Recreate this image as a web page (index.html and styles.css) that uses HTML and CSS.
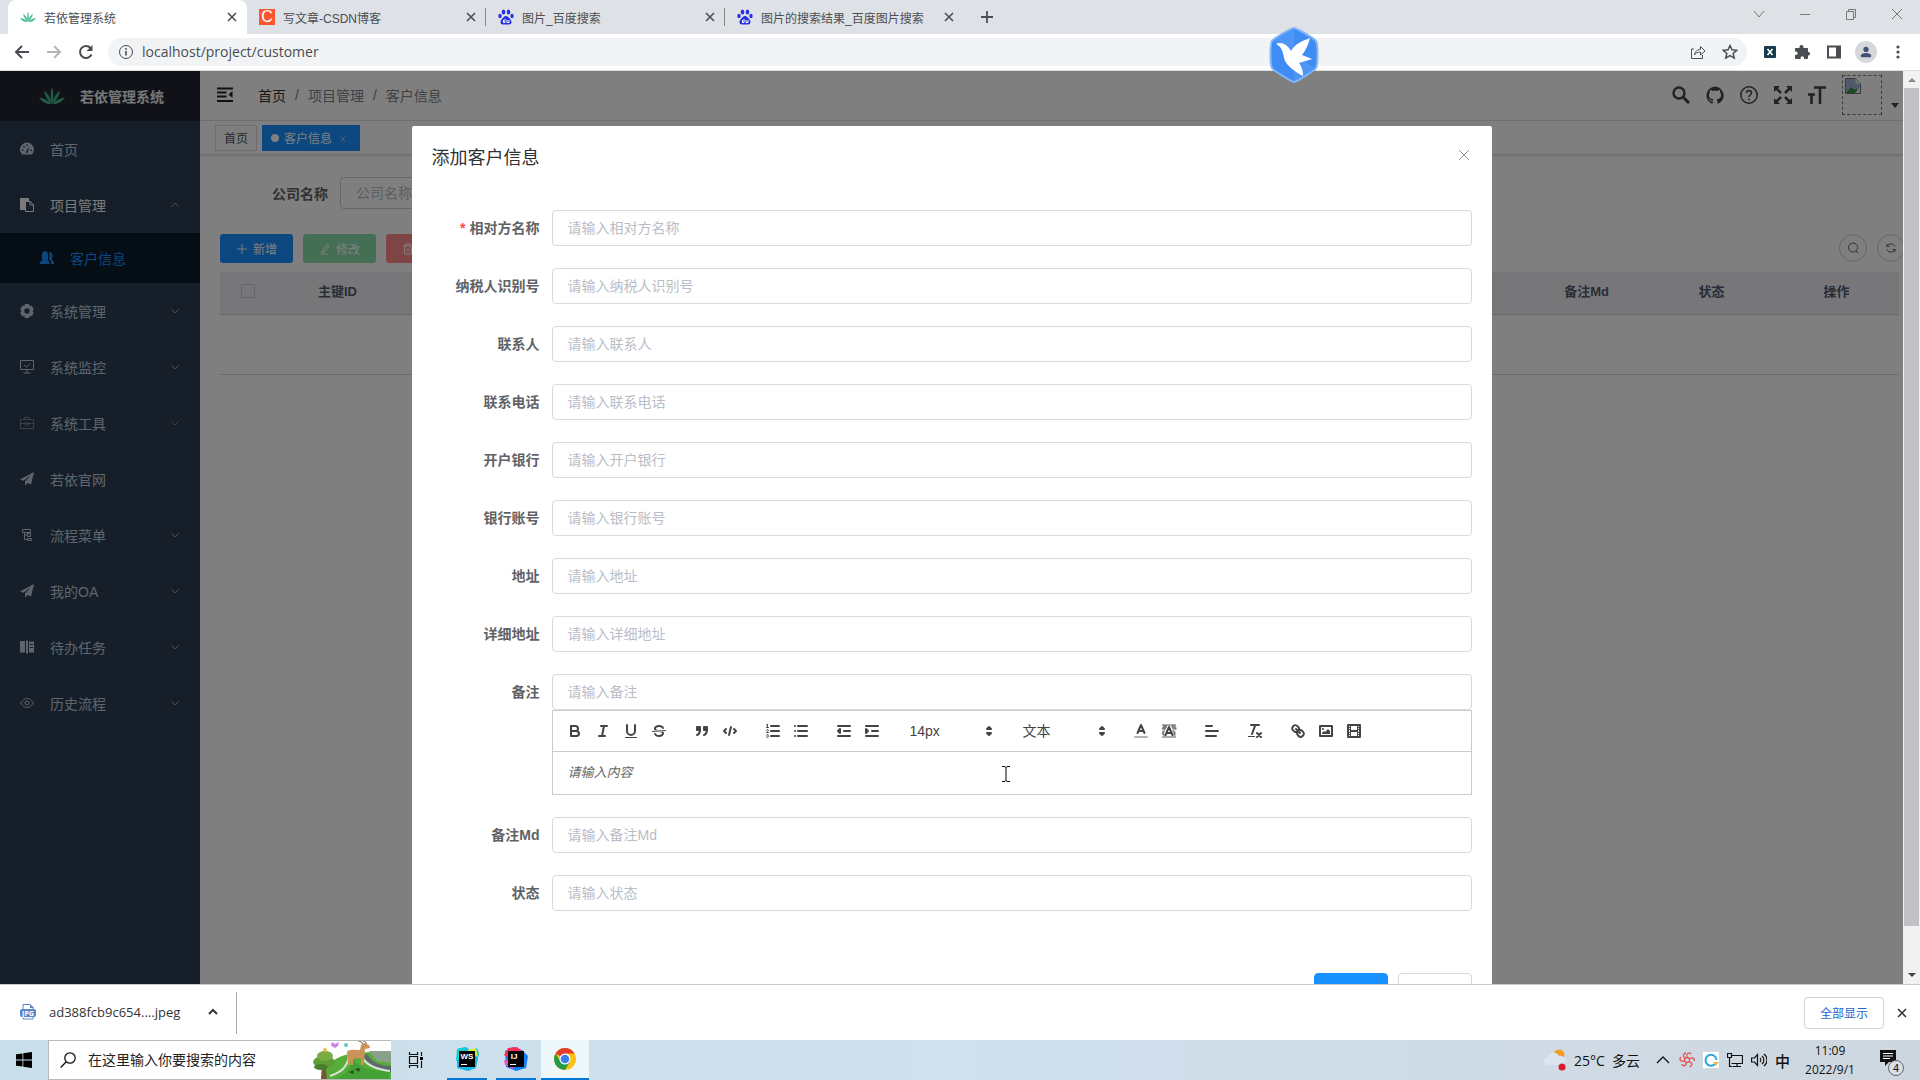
FILE: index.html
```html
<!DOCTYPE html>
<html lang="zh-CN">
<head>
    <meta charset="UTF-8">
    <meta name="viewport" content="width=device-width, initial-scale=1.0">
    <title>若依管理系统</title>
    <link rel="stylesheet" href="styles.css">
</head>
<body>
<!-- 公用图标 -->
<svg class="symbols" aria-hidden="true">
    <symbol id="leaf" viewBox="0 0 26 18">
        <path fill="#3fb98c" d="M13 17C11 12 11.500 5 13 0c1.500 5 2 12 0 17zM12.500 17C9 14 6 9 5 3.500 9 7 12 11 12.500 17zM13.500 17C17 14 20 9 21 3.500 17 7 14 11 13.500 17zM12 17C8 17.500 3 15 0 10.500c5 .5 9.500 3 12 6.500zM14 17c4 .5 9-2 12-6.500-5 .5-9.500 3-12 6.500z"/>
    </symbol>
    <symbol id="paw" viewBox="0 0 16 16">
        <g fill="#2932e1"><ellipse cx="5.500" cy="3" rx="1.800" ry="2.500"/><ellipse cx="10.500" cy="3" rx="1.800" ry="2.500"/><ellipse cx="2" cy="7" rx="1.700" ry="2.300"/><ellipse cx="14" cy="7" rx="1.700" ry="2.300"/><path d="M8 7c2 0 3 2 4.500 3.500C14 12 14 15.500 11 15.500H5c-3 0-3-3.500-1.500-5C5 9 6 7 8 7z"/></g>
        <path d="M5.500 11v2.500h1.500V10M9 11v2.500h2V11" fill="none" stroke="#fff"/>
    </symbol>
    <symbol id="close" viewBox="0 0 10 10"><path d="M1 1l8 8M9 1L1 9" fill="none" stroke="currentColor" stroke-width="1.600"/></symbol>
    <symbol id="thin-close" viewBox="0 0 12 12"><path d="M1 1l10 10M11 1L1 11" fill="none" stroke="currentColor"/></symbol>
    <symbol id="down" viewBox="0 0 10 10"><path d="M1 3l4 4 4-4" fill="none" stroke="currentColor"/></symbol>
    <symbol id="up" viewBox="0 0 10 10"><path d="M1 7l4-4 4 4" fill="none" stroke="currentColor"/></symbol>
    <symbol id="plane" viewBox="0 0 14 14"><path fill="currentColor" d="M14 0L0 7.500l3.500 1.300L11 3 5 9.500V14l2.300-3 3.700 1.500z"/></symbol>
    <symbol id="picker" viewBox="0 0 18 18"><path fill="#444" stroke="#444" stroke-linejoin="round" stroke-width="2" d="M7 11l2 2 2-2zM7 7l2-2 2 2z"/></symbol>
</svg>

<header class="tab-strip">
    <div class="tab active">
        <svg class="icon16"><use href="#leaf"/></svg>
        <span>若依管理系统</span>
        <button class="tab-close" aria-label="关闭"><svg><use href="#close"/></svg></button>
    </div>
    <div class="tab">
        <span class="csdn">C</span>
        <span>写文章-CSDN博客</span>
        <button class="tab-close" aria-label="关闭"><svg><use href="#close"/></svg></button>
    </div>
    <div class="tab">
        <svg class="icon16"><use href="#paw"/></svg>
        <span>图片_百度搜索</span>
        <button class="tab-close" aria-label="关闭"><svg><use href="#close"/></svg></button>
    </div>
    <div class="tab">
        <svg class="icon16"><use href="#paw"/></svg>
        <span>图片的搜索结果_百度图片搜索</span>
        <button class="tab-close" aria-label="关闭"><svg><use href="#close"/></svg></button>
    </div>
    <button class="new-tab" aria-label="新标签页"><svg viewBox="0 0 12 12"><path d="M6 0v12M0 6h12" stroke="currentColor" stroke-width="1.800"/></svg></button>
    <div class="window-buttons">
        <button aria-label="搜索标签页"><svg viewBox="0 0 12 12"><path d="M1 3l5 6 5-6"/></svg></button>
        <button aria-label="最小化"><svg viewBox="0 0 12 12"><path d="M1 6.500h10"/></svg></button>
        <button aria-label="还原"><svg viewBox="0 0 12 12"><path d="M1.500 3.500h7v8h-7zM3.500 3.500v-2h7v8h-2"/></svg></button>
        <button aria-label="关闭窗口"><svg viewBox="0 0 12 12"><path d="M1 1l10 10M11 1L1 11"/></svg></button>
    </div>
</header>

<div class="toolbar">
    <button aria-label="后退"><svg viewBox="0 0 16 16"><path d="M15 8H2M8 2L2 8l6 6" stroke-width="2"/></svg></button>
    <button class="disabled" aria-label="前进"><svg viewBox="0 0 16 16"><path d="M1 8h13M8 2l6 6-6 6" stroke-width="2"/></svg></button>
    <button aria-label="重新加载"><svg viewBox="0 0 16 16"><path d="M13.500 10.500A6 6 0 1 1 12.500 4" stroke-width="2"/><path d="M14.500 1v6h-6z" fill="currentColor" stroke="none"/></svg></button>
    <div class="omnibox">
        <svg viewBox="0 0 16 16"><circle cx="8" cy="8" r="6.500"/><path d="M8 7v4.500M8 4v1.700" stroke-width="1.600"/></svg>
        <input aria-label="地址" value="localhost/project/customer">
        <svg viewBox="0 0 16 16"><path d="M4 5H1.500v9.500h11V11M4.500 11c.5-4 3-5.500 6-5.500V2.500L15 7l-4.500 4V8c-3 0-5 1-6 3z"/></svg>
        <svg viewBox="0 0 16 16"><path d="M8 1.500l2 4.300 4.700.5-3.500 3.100 1 4.700L8 11.700l-4.200 2.400 1-4.700L1.300 6.300 6 5.800z" stroke-width="1.500"/></svg>
    </div>
    <div class="extensions">
        <button aria-label="扩展 X"><svg viewBox="0 0 16 16"><rect x="2" y="2" width="12" height="12" rx="1" fill="#173b4b" stroke="none"/><path d="M5.500 5l5 6M10.500 5l-5 6" stroke="#fff" stroke-width="1.600"/></svg></button>
        <button aria-label="扩展程序"><svg viewBox="0 0 16 16"><path fill="currentColor" stroke="none" d="M1 5c0-.6.400-1 1-1h3.500V3a2 2 0 0 1 4 0v1H13c.6 0 1 .4 1 1v3h.3a1.700 1.700 0 0 1 0 3.500H14V14c0 .6-.4 1-1 1h-3v-1a1.700 1.700 0 0 0-3.400 0v1H2c-.6 0-1-.4-1-1v-3h1a1.700 1.700 0 0 0 0-3.400H1z"/></svg></button>
        <button aria-label="侧边栏"><svg viewBox="0 0 16 16"><path d="M2 2.500h12v11H2z" stroke-width="2"/><path d="M10 2h4v12h-4z" fill="currentColor" stroke="none"/></svg></button>
        <button class="avatar" aria-label="用户"><svg viewBox="0 0 16 16"><g fill="#3f5270" stroke="none"><circle cx="8" cy="5" r="3"/><path d="M2 14v-2c0-2 3-3 6-3s6 1 6 3v2z"/></g></svg></button>
        <button aria-label="菜单"><svg viewBox="0 0 16 16"><g fill="currentColor" stroke="none"><circle cx="8" cy="3" r="1.600"/><circle cx="8" cy="8" r="1.600"/><circle cx="8" cy="13" r="1.600"/></g></svg></button>
    </div>
</div>

<!-- 悬浮的小鸟 -->
<svg class="bird" viewBox="0 0 50 56">
    <path d="M25 1c2 0 20 10 22 13s2 24 0 27-20 14-22 14S5 44 3 41s-2-24 0-27S23 1 25 1z" fill="#3f8cf5" stroke="#83b6fa" stroke-width="2"/>
    <path d="M25 2v26L4 14C8 10 22 2 25 2zM25 28l21 13c-3 4-18 13-21 13z" fill="#5b9ff8" opacity=".5"/>
    <path d="M7 17c4-2 9-1 13 4l2 3c4-7 11-10 19-13-2 7-4 12-8 17l10 4c-4 1-9 3-13 4 3 4 4 8 4 13-7-4-17-10-19-18-1-6-2-11-8-14z" fill="#fff"/>
</svg>

<div class="viewport">
    <div class="page">
        <aside class="sidebar">
            <a class="logo" href="#"><svg><use href="#leaf"/></svg>若依管理系统</a>
            <nav class="menu">
                <a href="#"><svg viewBox="0 0 14 14"><path fill="currentColor" fill-rule="evenodd" d="M2 12.500a7 7 0 1 1 10 0zM6.300 11h1.400L9.500 4.500 6.300 9zM2 7.500h1.500v1.500H2zM3.300 4h1.500v1.500H3.300zM6.300 2.500h1.400V4H6.300zM10.500 7.500H12V9h-1.500z"/></svg>首页</a>
                <a class="opened" href="#"><svg viewBox="0 0 14 14"><path fill="currentColor" d="M0 0h9v3H5v9H0z"/><path d="M5.500 3.500h5l3 3.500v6.500h-8zM10 3.500V7h3.500" fill="none" stroke="currentColor"/></svg>项目管理<svg class="arrow"><use href="#up"/></svg></a>
                <a class="child" href="#"><svg viewBox="0 0 14 14"><path fill="currentColor" d="M0 13v-2l2.500-2C1 6 1.500 0 5 0s4 6 2.500 9l2 2v2zM9 1c4 0 4 5 2.500 7.500L14 11v2h-3v-3L9 8.500C10 6 10 3 9 1z"/></svg>客户信息</a>
                <a href="#"><svg viewBox="0 0 14 14"><path fill="currentColor" fill-rule="evenodd" d="M5 0h4l.7 2 2.100-.2 2 3.400L12.500 7l1.300 1.800-2 3.400-2.100-.2L9 14H5l-.7-2-2.100.2-2-3.400L1.500 7 .2 5.200l2-3.400 2.100.2zM7 4.300a2.700 2.700 0 1 0 0 5.400 2.700 2.700 0 0 0 0-5.400z"/></svg>系统管理<svg class="arrow"><use href="#down"/></svg></a>
                <a href="#"><svg viewBox="0 0 14 14"><path d="M.5.500h13v9H.5zM7 9.500v3M3.500 13h7M4 5l2.500 2L10 3.500" fill="none" stroke="currentColor"/></svg>系统监控<svg class="arrow"><use href="#down"/></svg></a>
                <a class="dim-icon" href="#"><svg viewBox="0 0 14 14"><path d="M.5 3.500h13v9H.5zM4.500 3.500v-2h5v2M.5 7.500h13M5.500 6v3h3V6" fill="none" stroke="currentColor"/></svg>系统工具<svg class="arrow"><use href="#down"/></svg></a>
                <a href="#"><svg><use href="#plane"/></svg>若依官网</a>
                <a href="#"><svg viewBox="0 0 14 14"><path d="M2.500 1.500h8v3h-8zM4.500 4.500v7h3M4.500 7h3M7.500 5.500h3v3h-3zM7.500 10.500h4v2h-4z" fill="none" stroke="currentColor"/></svg>流程菜单<svg class="arrow"><use href="#down"/></svg></a>
                <a href="#"><svg><use href="#plane"/></svg>我的OA<svg class="arrow"><use href="#down"/></svg></a>
                <a href="#"><svg viewBox="0 0 14 14"><path fill="currentColor" fill-rule="evenodd" d="M0 1h5v11.500H0zM6 0l2 1v13l-2-1zM9 1.500h5v11H9zM10 4v1h3V4zM10 7v1h3V7z"/></svg>待办任务<svg class="arrow"><use href="#down"/></svg></a>
                <a href="#"><svg viewBox="0 0 14 14"><path d="M.7 7C3 3.500 5 2.500 7 2.500S11 3.500 13.300 7C11 10.500 9 11.500 7 11.500S3 10.500.7 7z" fill="none" stroke="currentColor"/><circle cx="7" cy="7" r="2" fill="none" stroke="currentColor"/></svg>历史流程<svg class="arrow"><use href="#down"/></svg></a>
            </nav>
        </aside>

        <main class="main">
            <div class="navbar">
                <svg class="hamburger" viewBox="0 0 16 16"><path d="M0 1.500h16M0 5.500h9.500M0 9.500h9.500M0 14h16" fill="none" stroke="#222" stroke-width="1.800"/><path d="M15.500 4v7L11.500 7.500z" fill="#222"/></svg>
                <div class="breadcrumb"><a href="#">首页</a><i>/</i><span>项目管理</span><i>/</i><span>客户信息</span></div>
                <div class="nav-icons">
                    <svg viewBox="0 0 18 18"><circle cx="7" cy="7" r="5.500" stroke-width="2.400"/><path d="M11 11l6 6" stroke-width="3"/></svg>
                    <svg viewBox="0 0 18 18"><path fill="currentColor" stroke="none" d="M9 .5a9 9 0 0 0-3 17.300c.5.100.7-.2.700-.5v-2c-2.500.5-3-1.100-3-1.100-.8-1.600-1.600-1.600-.8-1.600 1 .1 1.400 1.500 1.400 1.500.8 1 2 .8 2.500.5 0-.6.300-1 .6-1.300C5 13 3 12.300 3 8.800c0-1 .4-1.800 1-2.400-.2-.6-.3-1.500.1-2.500 0 0 .9-.2 2.600 1a8 8 0 0 1 4.600 0c1.700-1.200 2.600-1 2.600-1 .4 1 .3 1.900.1 2.500.6.600 1 1.400 1 2.400 0 3.500-2 4.200-4.300 4.500.4.400.7 1 .7 2v2c0 .3.200.6.700.5A9 9 0 0 0 9 .5z"/></svg>
                    <svg viewBox="0 0 18 18"><circle cx="9" cy="9" r="8.200" stroke-width="1.500"/><path d="M6.500 7C6.500 3.500 11.500 3.500 11.500 7c0 2-2.500 2-2.500 4M9 12.500v1.700" stroke-width="1.500"/></svg>
                    <svg viewBox="0 0 18 18"><path d="M2 2l5 5M16 2l-5 5M2 16l5-5M16 16l-5-5" stroke-width="2.500"/><path d="M0 0h6L0 6zM18 0h-6l6 6zM0 18h6l-6-6zM18 18h-6l6-6z" fill="currentColor" stroke="none"/></svg>
                    <svg viewBox="0 0 18 18"><path d="M6 1.500h12M12 1v17M0 8.500h7M3.500 8v10" stroke-width="2.600"/></svg>
                    <div class="broken"><svg viewBox="0 0 16 16"><path d="M.5.500h10l5 5v10H.5z" fill="#9eb6d8" stroke="#777"/><path d="M1 15l5-6 4 3 2-2v5z" fill="#3c9440" stroke="none"/><path d="M10.500.5v5h5zM15 9l-5 6h5z" fill="#eee" stroke="none"/></svg></div>
                    <svg class="caret" viewBox="0 0 10 6"><path d="M1 0h8L5 5z" fill="currentColor" stroke="none"/></svg>
                </div>
            </div>
            <div class="tags">
                <a class="tag" href="#">首页</a>
                <a class="tag active" href="#">客户信息<svg><use href="#thin-close"/></svg></a>
            </div>
            <div class="content">
                <div class="query">
                    <label for="company">公司名称</label>
                    <input id="company" placeholder="公司名称">
                </div>
                <div class="actions">
                    <button class="btn primary"><svg viewBox="0 0 12 12"><path d="M6 1v10M1 6h10"/></svg>新增</button>
                    <button class="btn success" disabled><svg viewBox="0 0 12 12"><path d="M2 11h7M3 8.500l5-7 2 1.500-5 6-2.500.5z"/></svg>修改</button>
                    <button class="btn danger" disabled><svg viewBox="0 0 12 12"><path d="M1 3h10M4 3V1h4v2M2.500 3v8h7V3M5 5.500v3M7 5.500v3"/></svg>删除</button>
                    <div class="tools">
                        <button aria-label="隐藏搜索"><svg viewBox="0 0 12 12"><circle cx="6" cy="5.500" r="4.500"/><path d="M9 9l2 2"/></svg></button>
                        <button aria-label="刷新"><svg viewBox="0 0 12 12"><path d="M2 4.500a4.300 4.300 0 0 1 8 0M10 7.500a4.300 4.300 0 0 1-8 0M2 2v2.500h2.500M10 10V7.500H7.500"/></svg></button>
                    </div>
                </div>
                <table>
                    <thead>
                        <tr><th class="check"><input type="checkbox" aria-label="全选"></th><th>主键ID</th><th colspan="9"></th><th>备注Md</th><th>状态</th><th>操作</th></tr>
                    </thead>
                    <tbody>
                        <tr><td colspan="14"></td></tr>
                    </tbody>
                </table>
            </div>
        </main>

        <div class="mask">
            <section class="dialog" role="dialog" aria-labelledby="dialog-title">
                <header>
                    <h2 id="dialog-title">添加客户信息</h2>
                    <button aria-label="关闭"><svg><use href="#thin-close"/></svg></button>
                </header>
                <form>
                    <div class="row required"><label for="f1">相对方名称</label><input id="f1" placeholder="请输入相对方名称"></div>
                    <div class="row"><label for="f2">纳税人识别号</label><input id="f2" placeholder="请输入纳税人识别号"></div>
                    <div class="row"><label for="f3">联系人</label><input id="f3" placeholder="请输入联系人"></div>
                    <div class="row"><label for="f4">联系电话</label><input id="f4" placeholder="请输入联系电话"></div>
                    <div class="row"><label for="f5">开户银行</label><input id="f5" placeholder="请输入开户银行"></div>
                    <div class="row"><label for="f6">银行账号</label><input id="f6" placeholder="请输入银行账号"></div>
                    <div class="row"><label for="f7">地址</label><input id="f7" placeholder="请输入地址"></div>
                    <div class="row"><label for="f8">详细地址</label><input id="f8" placeholder="请输入详细地址"></div>
                    <div class="row">
                        <label for="f9">备注</label>
                        <div class="field">
                            <input id="f9" placeholder="请输入备注">
                            <div class="editor">
                                <div class="ql-toolbar">
                                    <div class="formats">
                                        <button type="button" aria-label="加粗"><svg viewBox="0 0 18 18"><path d="M5 4h4.500a2.500 2.500 0 0 1 0 5H5zM5 9h5.500a2.500 2.500 0 0 1 0 5H5z"/></svg></button>
                                        <button type="button" aria-label="斜体"><svg viewBox="0 0 18 18"><path d="M7 4h6M5 14h6M8 14l2-10"/></svg></button>
                                        <button type="button" aria-label="下划线"><svg viewBox="0 0 18 18"><path d="M5 3v6a4 4 0 0 0 8 0V3"/><rect class="fill" x="3" y="15" width="12" height="1"/></svg></button>
                                        <button type="button" aria-label="删除线"><svg viewBox="0 0 18 18"><path class="thin" d="M15.500 8.500l-13 1"/><path class="fill" d="M9.007,8C6.542,7.791,6,7.519,6,6.500,6,5.792,7.283,5,9,5c1.571,0,2.765.679,2.969,1.309a1,1,0,0,0,1.900-.617C13.356,4.106,11.354,3,9,3,6.200,3,4,4.538,4,6.500a3.200,3.200,0,0,0,.5,1.843ZM8.984,10C11.457,10.208,12,10.479,12,11.500c0,.708-1.283,1.500-3,1.500-1.571,0-2.765-.679-2.969-1.309a1,1,0,1,0-1.900.617C4.644,13.894,6.646,15,9,15c2.800,0,5-1.538,5-3.500a3.200,3.200,0,0,0-.5-1.843Z"/></svg></button>
                                    </div>
                                    <div class="formats">
                                        <button type="button" aria-label="引用"><svg viewBox="0 0 18 18"><path class="both" d="M4 5h3v3H4zM11 5h3v3h-3zM7 8c0 4.031-3 5-3 5M14 8c0 4.031-3 5-3 5"/></svg></button>
                                        <button type="button" aria-label="代码块"><svg viewBox="0 0 18 18"><path d="M5 7L3 9l2 2M13 7l2 2-2 2M10 5L8 13"/></svg></button>
                                    </div>
                                    <div class="formats">
                                        <button type="button" aria-label="有序列表"><svg viewBox="0 0 18 18"><path d="M7 4h8M7 9h8M7 14h8"/><path class="thin" d="M2.500 2.800l1-.5v3.200M2.500 5.500h2M4.500 10.500h-2c0-.234 1.850-1.076 1.850-2.234a.959.959 0 0 0-1.850-.11M2.500 14.846a.959.959 0 0 0 1.850-.109A.7.7 0 0 0 3.750 14a.688.688 0 0 0 .6-.736.959.959 0 0 0-1.850-.109"/></svg></button>
                                        <button type="button" aria-label="无序列表"><svg viewBox="0 0 18 18"><path d="M6 4h9M6 9h9M6 14h9M3 4h0M3 9h0M3 14h0"/></svg></button>
                                    </div>
                                    <div class="formats">
                                        <button type="button" aria-label="减少缩进"><svg viewBox="0 0 18 18"><path d="M3 14h12M3 4h12M9 9h6"/><path class="both" d="M5 7v4L3 9z"/></svg></button>
                                        <button type="button" aria-label="增加缩进"><svg viewBox="0 0 18 18"><path d="M3 14h12M3 4h12M9 9h6"/><path class="both" d="M3 7v4l2-2z"/></svg></button>
                                    </div>
                                    <div class="picker"><select aria-label="字号"><option>14px</option></select><svg><use href="#picker"/></svg></div>
                                    <div class="picker"><select aria-label="标题"><option>文本</option></select><svg><use href="#picker"/></svg></div>
                                    <div class="formats">
                                        <button type="button" aria-label="字体颜色"><svg viewBox="0 0 18 18"><path d="M5.500 11L9 3l3.500 8M11.630 9H6.380"/><path d="M3 15h12" opacity=".4"/></svg></button>
                                        <button type="button" aria-label="背景颜色"><svg viewBox="0 0 18 18"><path class="thin" stroke-dasharray="1 1" d="M2.500 3h13M3.500 5h3M12 5h4M2.500 7h3M13 7h3M3.500 9h2M13 9h2M2.500 11h2M14 11h2M3.500 13h2M14 13h1M2.500 15h13M3.500 4h3M12 4h3M2.500 6h3M13 6h3M2.500 10h2M14 10h2M2.500 12h2M14 12h2"/><path d="M5.500 13L9 5l3.500 8M11.630 11H6.380"/></svg></button>
                                    </div>
                                    <div class="formats">
                                        <button type="button" aria-label="对齐"><svg viewBox="0 0 18 18"><path d="M3 9h12M3 14h10M3 4h6"/></svg></button>
                                    </div>
                                    <div class="formats">
                                        <button type="button" aria-label="清除格式"><svg viewBox="0 0 18 18"><path d="M5 3h8M6 12l3.350-9M11 11l4 4M15 11l-4 4"/><rect class="fill" x="2" y="14" width="7" height="1"/></svg></button>
                                    </div>
                                    <div class="formats">
                                        <button type="button" aria-label="链接"><svg viewBox="0 0 18 18"><path d="M7 7l4 4M8.900 4.577a3.476 3.476 0 0 1 .36 4.679A3.476 3.476 0 0 1 4.577 8.900C3.185 7.500 2.035 6.400 4.217 4.217S7.500 3.185 8.900 4.577ZM13.423 9.100a3.476 3.476 0 0 0-4.679-.36 3.476 3.476 0 0 0 .36 4.679c1.392 1.392 2.500 2.542 4.679.36S14.815 10.500 13.423 9.100Z"/></svg></button>
                                        <button type="button" aria-label="图片"><svg viewBox="0 0 18 18"><path d="M3 4h12v10H3z"/><path class="fill" d="M5 12v-1l2-2 1 1 3-3 2 2v3z"/><circle class="fill" cx="6" cy="7" r="1"/></svg></button>
                                        <button type="button" aria-label="视频"><svg viewBox="0 0 18 18"><path d="M3 3h12v12H3z"/><path class="fill" d="M5 3h1v12H5zM12 3h1v12h-1zM5 8h8v2H5zM3 5h3v1H3zM3 7h3v1H3zM3 10h3v1H3zM3 12h3v1H3zM12 5h3v1h-3zM12 7h3v1h-3zM12 10h3v1h-3zM12 12h3v1h-3z"/></svg></button>
                                    </div>
                                </div>
                                <textarea rows="1" aria-label="备注内容" placeholder="请输入内容"></textarea>
                                <svg class="cursor" viewBox="0 0 8 16"><path d="M0 .500h3l1 1 1-1h3M0 15.500h3l1-1 1 1h3M4 1v14" fill="none" stroke="#000"/></svg>
                            </div>
                        </div>
                    </div>
                    <div class="row"><label for="f10">备注Md</label><input id="f10" placeholder="请输入备注Md"></div>
                    <div class="row"><label for="f11">状态</label><input id="f11" placeholder="请输入状态"></div>
                </form>
                <footer>
                    <button class="confirm" aria-label="确定"></button>
                    <button aria-label="取消"></button>
                </footer>
            </section>
        </div>
    </div>
    <div class="scrollbar">
        <svg viewBox="0 0 10 6"><path d="M1 5h8L5 1z" fill="#8a8a8a"/></svg>
        <div class="thumb"></div>
        <svg viewBox="0 0 10 6"><path d="M1 1h8L5 5z" fill="#444"/></svg>
    </div>
</div>

<div class="downloads">
    <div class="download-item">
        <svg viewBox="0 0 16 16"><path d="M3 .500h7l3 3V15H3z" fill="#fff" stroke="#5b87c9"/><path d="M10 0v4h4z" fill="#5b87c9"/><rect y="5" width="16" height="8" rx="2" fill="#5b87c9"/><text x="8" y="12" text-anchor="middle">JPG</text></svg>
        <span>ad388fcb9c654....jpeg</span>
        <button aria-label="更多"><svg><use href="#up"/></svg></button>
    </div>
    <button class="show-all">全部显示</button>
    <button class="close-bar" aria-label="关闭"><svg><use href="#close"/></svg></button>
</div>

<footer class="taskbar">
    <button class="start" aria-label="开始"><svg viewBox="0 0 16 16"><path d="M0 2.300L6.500 1.400v6.200H0zM7.300 1.300L16 0v7.600H7.300zM0 8.400h6.500v6.200L0 13.700zM7.300 8.400H16V16l-8.700-1.300z"/></svg></button>
    <label class="search">
        <svg viewBox="0 0 16 16"><circle cx="10" cy="6" r="5.200" fill="none" stroke="#111" stroke-width="1.300"/><path d="M6 10L.7 15.500" stroke="#111" stroke-width="1.300"/></svg>
        <input placeholder="在这里输入你要搜索的内容">
        <svg class="scene" viewBox="0 0 78 38">
            <path d="M8 38c4-16 18-25 36-26 14-2 24 0 34-2v28z" fill="#58ad3a"/>
            <path d="M56 10h22v12l-14-2z" fill="#8aa08b"/><path d="M54 13c6 9 14 12 24 12v6c-12-1-22-7-28-16z" fill="#5f6a6b"/>
            <path d="M20 38c14-4 18-10 20-21 4 9 14 13 36 13v8z" fill="#43a135"/><path d="M36 15c-2 12-8 16-19 20M49 16c3 6 12 12 28 14" stroke="#d9e4d8" stroke-width="2" fill="none"/>
            <path d="M9 22h3l2 16H8z" fill="#7a5630"/><ellipse cx="11" cy="21" rx="11" ry="6" fill="#5f9d37"/><ellipse cx="12" cy="15" rx="8" ry="5" fill="#79ad43"/><ellipse cx="8" cy="26" rx="7" ry="3" fill="#477e2d"/>
            <path d="M34 10c5-2 9-1 13-1l1-5 3-2 5 2 1 3-5 1-1 12-1 4h-2v-6l-3-1-5 1v6h-2v-6l-1 6h-2z" fill="#cc925a"/><path d="M50 3c-1-2-3-3-5-3M53 3c0-2-1-3-3-3" stroke="#70533b" fill="none"/>
            <path d="M36 31l5-2-1 4zM42 28l5-1-1 4z" fill="#234d22"/><path d="M19 1l3 2 4-2-1 4-3 2-4-2z" fill="#d183e7"/><circle cx="33" cy="4" r="2" fill="#63c8b4"/><circle cx="12" cy="9" r="2" fill="#edba48"/>
        </svg>
    </label>
    <button class="app taskview" aria-label="任务视图"><svg viewBox="0 0 16 16"><path d="M1.500 0v2.500h8V0M1.500 16v-2.500h8V16M1.500 4.500h8v7h-8zM13.500 0v4M13.500 9v7" fill="none" stroke="#111" stroke-width="1.200"/><rect x="12" y="5" width="3" height="3"/></svg></button>
    <button class="app open" aria-label="WebStorm"><svg viewBox="0 0 24 24"><path d="M2 2l9-2 5 4 6-3 2 6-3 14-8 3-11-3z" fill="#15b6e8"/><path d="M12 3l9-2 2 9z" fill="#d9ed39"/><path d="M2 2l9-2-1 10-9 4z" fill="#0bd3d2"/><rect x="4" y="4" width="16" height="16"/><text x="12" y="12" text-anchor="middle">WS</text><path d="M6 17.500h6" stroke="#fff"/></svg></button>
    <button class="app open" aria-label="IntelliJ IDEA"><svg viewBox="0 0 24 24"><path d="M1 4l8-4 9 3 6 6-2 12-10 3-10-4z" fill="#147dfa"/><path d="M4 1l9-1 5 4-12 8-6-4z" fill="#fc2b57"/><path d="M0 13l9 1v8l-8-4z" fill="#f24ebd"/><rect x="4" y="4" width="16" height="16"/><text x="10" y="12" text-anchor="middle">IJ</text><path d="M6 17.500h6" stroke="#fff"/></svg></button>
    <button class="app open current" aria-label="Chrome"><svg viewBox="0 0 24 24"><circle cx="12" cy="12" r="11" fill="#fbc116"/><path d="M12 12L2.500 6.500A11 11 0 0 1 21.500 6.500H12z" fill="#e33b2e"/><path d="M2.500 6.500A11 11 0 0 0 12 23l5-8.500-5-2.500-4.500 2.500z" fill="#269b48"/><circle cx="12" cy="12" r="5.500" fill="#fff"/><circle cx="12" cy="12" r="4.300" fill="#3b7ded"/></svg></button>
    <div class="tray">
        <svg class="weather" viewBox="0 0 22 22"><circle cx="15" cy="6" r="5.500" fill="#f59d20"/><path d="M4 16a4 4 0 0 1 0-8 6 6 0 0 1 11-1 4.500 4.500 0 0 1 3 9z" fill="#dbe5f1"/><circle cx="18" cy="18" r="3.500" fill="#db1832"/></svg>
        <span class="temperature">25°C&nbsp; 多云</span>
        <svg viewBox="0 0 16 16"><path d="M2 11l6-6 6 6" stroke-width="1.300"/></svg>
        <svg viewBox="0 0 16 16"><g stroke="#e45454" stroke-width="1.300"><circle cx="8" cy="8" r="2.500"/><path d="M8 5c-1-4 2-5 4-3M11 7c2-3 5 0 4 2M10.500 10c4 1 2 4 0 5M7 11c0 4-4 3-4 1M5 9C1 10 0 7 2 5M6 6C3 4 5 1 7 1"/></g></svg>
        <svg viewBox="0 0 16 16"><path d="M0 0h16v16H0z" fill="#fff" stroke="none"/><path d="M12 12a5.500 5.500 0 1 1 1.500-4" stroke="#2aa7df" stroke-width="2"/><path d="M10 10h6l-3 4z" fill="#edbd42" stroke="none"/></svg>
        <svg viewBox="0 0 16 16"><path d="M4.500 3.500h11v8h-11M10 11.500v3M6 14.500h8M.5 1.500h4v4h-4zM2.500 5.500v9h3" stroke-width="1.200"/></svg>
        <svg viewBox="0 0 16 16"><path d="M.5 6h3l3-3.500v11L3.500 10h-3zM9 6c1 1 1 3 0 4M11 4c2.500 2 2.500 6 0 8M13 2c4 3 4 9 0 12" stroke-width="1.200"/></svg>
        <span class="ime">中</span>
        <div class="clock"><span>11:09</span><span>2022/9/1</span></div>
        <div class="notice"><svg viewBox="0 0 16 16"><path d="M0 0h16v12H9l-4 4v-4H0z" fill="#111" stroke="none"/><path d="M3 3.500h10M3 6h10M3 8.500h7" stroke="#fff"/></svg><span>4</span></div>
    </div>
</footer>
</body>
</html>
```

FILE: styles.css
```css
* {
    box-sizing: border-box;
}
body {
    margin: 0;
    height: 100vh;
    display: flex;
    flex-direction: column;
    overflow: hidden;
    font-family: "Liberation Sans", "Noto Sans CJK SC", sans-serif;
    font-size: 14px;
    color: #333;
    background: #fff;
}
button, input, select, textarea {
    font: inherit;
    color: inherit;
    margin: 0;
    padding: 0;
    border: 0;
    background: none;
    outline: none;
}
a {
    color: inherit;
    text-decoration: none;
}
svg {
    display: block;
    flex: none;
}
.symbols {
    position: absolute;
    width: 0;
    height: 0;
}

/* 浏览器标签 */
.tab-strip {
    height: 34px;
    flex: none;
    display: flex;
    align-items: stretch;
    padding-left: 8px;
    background: #dee1e6;
    font-size: 12px;
    color: #4b4e52;
}
.tab {
    width: 239px;
    display: flex;
    align-items: center;
    gap: 8px;
    padding: 0 10px 0 12px;
    background: linear-gradient(#888, #888) right 8px / 1px 18px no-repeat;
}
.tab:nth-child(4), .tab:nth-child(1) {
    background: none;
}
.tab.active {
    background: #fff;
    border-radius: 8px 8px 0 0;
}
.icon16 {
    width: 16px;
    height: 16px;
}
.csdn {
    width: 16px;
    height: 16px;
    background: #fc5531;
    color: #fff;
    font-size: 16px;
    line-height: 16px;
    text-align: center;
}
.tab-close {
    margin-left: auto;
}
.tab-close svg {
    width: 10px;
    height: 10px;
}
.new-tab {
    padding: 0 17px;
}
.new-tab svg {
    width: 12px;
    height: 12px;
}
.window-buttons {
    margin-left: auto;
    display: flex;
}
.window-buttons button {
    width: 46px;
    padding-bottom: 6px;
    display: flex;
    align-items: center;
    justify-content: center;
}
.window-buttons svg {
    width: 12px;
    height: 12px;
    fill: none;
    stroke: #777;
}

/* 地址栏 */
.toolbar {
    height: 37px;
    flex: none;
    display: flex;
    align-items: center;
    padding: 0 6px 1px;
    background: #fff;
    border-bottom: 1px solid #ddd;
    color: #4a4d51;
}
.toolbar svg {
    width: 16px;
    height: 16px;
    fill: none;
    stroke: currentColor;
}
.toolbar button {
    width: 32px;
    height: 28px;
    display: flex;
    align-items: center;
    justify-content: center;
}
.toolbar .disabled {
    color: #b4b6b8;
}
.omnibox {
    flex: 1;
    height: 28px;
    margin: 0 7px 0 6px;
    padding: 0 9px 0 10px;
    display: flex;
    align-items: center;
    gap: 16px;
    border-radius: 14px;
    background: #f1f3f4;
}
.omnibox input {
    flex: 1;
    margin-left: -8px;
    font-family: "Open Sans", sans-serif;
}
.extensions {
    display: flex;
}
.toolbar .avatar svg {
    width: 22px;
    height: 22px;
    padding: 4px;
    border-radius: 50%;
    background: #d6d8dc;
}
.bird {
    position: absolute;
    z-index: 5;
    left: 66.1%;
    top: 27px;
    width: 50px;
    height: 56px;
}

/* 页面 */
.viewport {
    flex: 1;
    min-height: 0;
    display: flex;
}
.page {
    flex: 1;
    min-width: 0;
    display: flex;
    position: relative;
    overflow: hidden;
}
.sidebar {
    width: 200px;
    flex: none;
    background: #2d3e52;
    color: #bfcbd9;
}
.logo {
    height: 50px;
    display: flex;
    align-items: center;
    padding-left: 39px;
    gap: 15px;
    background: #22242e;
    color: #eee;
    font-weight: bold;
}
.logo svg {
    width: 26px;
    height: 18px;
}
.menu a {
    height: 56px;
    display: flex;
    align-items: center;
    padding: 0 20px;
    gap: 16px;
}
.menu svg {
    width: 14px;
    height: 14px;
}
.menu .arrow {
    width: 10px;
    height: 10px;
    margin-left: auto;
    color: #909399;
}
.menu .opened {
    color: #f4f4f5;
}
.menu .child {
    height: 50px;
    padding-left: 40px;
    background: #0a1a2a;
    color: #1890ff;
}
.menu .dim-icon svg {
    color: #76818d;
}
.main {
    flex: 1;
    min-width: 0;
    background: #fff;
}
.navbar {
    height: 50px;
    display: flex;
    align-items: center;
    padding: 0 3px 2px 17px;
    border-bottom: 1px solid #e2e3e6;
}
.hamburger {
    width: 16px;
    height: 16px;
}
.breadcrumb {
    display: flex;
    align-items: center;
    padding-left: 25px;
    color: #7d8289;
}
.breadcrumb a {
    color: #303133;
}
.breadcrumb i {
    margin: 0 9px;
    font-style: normal;
}
.nav-icons {
    margin-left: auto;
    display: flex;
    align-items: center;
    gap: 16px;
    color: #444;
}
.nav-icons svg {
    width: 18px;
    height: 18px;
    fill: none;
    stroke: currentColor;
}
.broken {
    width: 40px;
    height: 40px;
    padding: 2px;
    border: 1px dashed #777;
}
.nav-icons .broken svg {
    width: 16px;
    height: 16px;
}
.nav-icons .caret {
    width: 10px;
    height: 6px;
    margin: 22px 0 0 -8px;
}
.tags {
    height: 34px;
    display: flex;
    align-items: center;
    padding-left: 15px;
    gap: 5px;
    border-bottom: 1px solid #d8dce5;
    box-shadow: 0 1px 3px rgba(0, 0, 0, 0.12);
    font-size: 12px;
}
.tag {
    height: 26px;
    display: flex;
    align-items: center;
    padding: 0 8px;
    border: 1px solid #d8dce5;
    color: #495060;
}
.tag.active {
    background: #1890ff;
    border-color: #1890ff;
    color: #fff;
}
.tag.active::before {
    content: "";
    width: 8px;
    height: 8px;
    margin-right: 5px;
    border-radius: 50%;
    background: #fff;
}
.tag svg {
    width: 6px;
    height: 6px;
    margin: 2px 5px 0 8px;
}
.content {
    padding: 22px 4px 0 20px;
}
.query {
    display: flex;
    align-items: center;
    gap: 12px;
    padding-left: 52px;
    margin-bottom: 25px;
}
.query label {
    font-weight: bold;
    color: #606266;
}
.query input {
    width: 240px;
    height: 32px;
    padding: 0 15px;
    border: 1px solid #c8ccd4;
    border-radius: 4px;
}
input::placeholder, textarea::placeholder {
    color: #b9bdc6;
    opacity: 1;
}
.actions {
    display: flex;
    gap: 10px;
    margin-bottom: 9px;
}
.btn {
    width: 73px;
    height: 29px;
    display: flex;
    align-items: center;
    justify-content: center;
    gap: 5px;
    border-radius: 3px;
    color: #fff;
    font-size: 12px;
}
.actions svg {
    width: 12px;
    height: 12px;
    fill: none;
    stroke: currentColor;
}
.primary {
    background: #1890ff;
}
.success {
    background: #89dfab;
}
.danger {
    background: #ff8a8a;
}
.tools {
    margin-left: auto;
    margin-right: -6px;
    display: flex;
    gap: 10px;
}
.tools button {
    width: 28px;
    height: 28px;
    display: flex;
    align-items: center;
    justify-content: center;
    border: 1px solid #c8ccd4;
    border-radius: 50%;
    color: #606266;
}
table {
    width: 100%;
    border-collapse: collapse;
    table-layout: fixed;
}
th {
    height: 42px;
    padding: 0 0 4px;
    border-bottom: 1px solid #d0d5e0;
    background: #eeeff3;
    color: #515a6e;
    font-size: 13px;
}
.check {
    width: 55px;
}
.check input {
    appearance: none;
    display: block;
    width: 14px;
    height: 14px;
    margin: 0 auto;
    border: 1px solid #c8ccd4;
    border-radius: 2px;
}
td {
    height: 60px;
    border-bottom: 1px solid #d0d5e0;
}

/* 对话框 */
.mask {
    position: absolute;
    inset: 0;
    overflow: hidden;
    background: rgba(0, 0, 0, 0.5);
}
.dialog {
    width: 1080px;
    max-width: 96%;
    margin: 55px auto 0;
    border-radius: 2px;
    background: #fff;
    color: #606266;
}
.dialog header {
    display: flex;
    justify-content: space-between;
    align-items: center;
    padding: 20px 22px 10px 20px;
}
.dialog h2 {
    margin: 0;
    font-size: 18px;
    font-weight: normal;
    line-height: 24px;
    color: #303133;
}
.dialog header button {
    color: #909399;
    padding-bottom: 6px;
}
.dialog header svg {
    width: 12px;
    height: 12px;
}
.dialog form {
    padding: 30px 20px;
}
.row {
    display: flex;
    margin-bottom: 22px;
}
.row label {
    width: 120px;
    flex: none;
    padding-right: 12px;
    text-align: right;
    line-height: 36px;
    font-weight: bold;
}
.required label::before {
    content: "*";
    color: #ff4949;
    margin-right: 4px;
}
.row input {
    width: 100%;
    height: 36px;
    padding: 0 15px;
    border: 1px solid #d6d9e2;
    border-radius: 4px;
    display: block;
}
.field {
    flex: 1;
}
.editor {
    position: relative;
    border: 1px solid #ccc;
}
.ql-toolbar {
    display: flex;
    flex-wrap: wrap;
    gap: 15px;
    padding: 8px;
    border-bottom: 1px solid #ccc;
}
.formats {
    display: flex;
}
.formats button {
    width: 28px;
    height: 24px;
    padding: 3px 5px;
}
.formats svg {
    width: 18px;
    height: 18px;
    fill: none;
    stroke: #444;
    stroke-width: 2;
    stroke-linecap: round;
    stroke-linejoin: round;
}
.formats .thin {
    stroke-width: 1;
}
.formats .fill {
    fill: #444;
    stroke: none;
}
.formats .both {
    fill: #444;
}
.picker {
    width: 98px;
    height: 24px;
    position: relative;
    color: #444;
}
.picker select {
    appearance: none;
    width: 100%;
    height: 24px;
    padding-left: 9px;
}
.picker svg {
    position: absolute;
    right: 1px;
    top: 3px;
    width: 18px;
    height: 18px;
    pointer-events: none;
}
.editor textarea {
    display: block;
    width: 100%;
    height: 42px;
    padding: 12px 15px;
    line-height: 18px;
    font-size: 13px;
    resize: none;
}
.editor textarea::placeholder {
    color: #666;
    font-style: italic;
}
.cursor {
    position: absolute;
    left: 49%;
    bottom: 12px;
    width: 8px;
    height: 16px;
}
.dialog footer {
    display: flex;
    justify-content: flex-end;
    gap: 10px;
    padding: 10px 20px 20px;
}
.dialog footer button {
    width: 74px;
    height: 36px;
    border: 1px solid #d6d9e2;
    border-radius: 4px;
}
.dialog footer .confirm {
    background: #1890ff;
    border-color: #1890ff;
}
.scrollbar {
    width: 17px;
    flex: none;
    display: flex;
    flex-direction: column;
    align-items: center;
    padding: 6px 0;
    background: #f1f1f1;
}
.scrollbar svg {
    width: 10px;
    height: 6px;
}
.thumb {
    width: 15px;
    flex: 1;
    margin: 5px 0 46px;
    background: #c1c1c6;
}

/* 下载栏 */
.downloads {
    height: 56px;
    flex: none;
    display: flex;
    align-items: center;
    padding-right: 13px;
    border-top: 1px solid #ccc;
    background: #fff;
}
.download-item {
    height: 42px;
    width: 237px;
    display: flex;
    align-items: center;
    padding: 0 18px 2px 20px;
    gap: 13px;
    border-right: 1px solid #aaa;
    font-family: "Open Sans", sans-serif;
    font-size: 13px;
}
.download-item > svg {
    width: 16px;
    height: 16px;
}
.download-item text {
    font-size: 7px;
    font-weight: bold;
    fill: #fff;
}
.download-item button {
    margin-left: auto;
}
.download-item button svg {
    width: 10px;
    height: 10px;
    stroke-width: 2;
}
.show-all {
    width: 80px;
    height: 32px;
    margin-left: auto;
    border: 1px solid #d0d3d8;
    border-radius: 4px;
    color: #1a66c8;
    font-size: 12px;
}
.close-bar {
    margin-left: 13px;
}
.close-bar svg {
    width: 10px;
    height: 10px;
}

/* 任务栏 */
.taskbar {
    height: 40px;
    flex: none;
    display: flex;
    align-items: stretch;
    background: linear-gradient(90deg, #c9dfea, #d0e0ee 50%, #ced7df);
    color: #111;
}
.start {
    width: 48px;
    padding-left: 16px;
}
.start svg {
    width: 16px;
    height: 16px;
}
.search {
    width: 343px;
    display: flex;
    align-items: center;
    padding-left: 11px;
    gap: 12px;
    border: 1px solid #bbb;
    border-right: 0;
    background: #fff;
}
.search svg {
    width: 16px;
    height: 16px;
}
.search input {
    flex: 1;
    min-width: 0;
}
.search input::placeholder {
    color: #222;
}
.search .scene {
    width: 78px;
    height: 38px;
}
.app {
    width: 40px;
    margin-left: 9px;
    display: flex;
    align-items: center;
    justify-content: center;
}
.app svg {
    width: 24px;
    height: 24px;
}
.app text {
    fill: #fff;
    font-size: 8px;
    font-weight: bold;
}
.taskview {
    margin: 0 11px 0 5px;
}
.taskview svg {
    width: 16px;
    height: 16px;
}
.open {
    border-bottom: 2px solid #0078d7;
}
.current {
    width: 48px;
    margin-left: 5px;
    background: #eef7fb;
}
.taskview + .open {
    margin-left: 0;
}
.tray {
    margin-left: auto;
    padding-right: 16px;
    display: flex;
    align-items: center;
    gap: 8px;
}
.tray svg {
    width: 16px;
    height: 16px;
    fill: none;
    stroke: #111;
}
.tray .weather {
    width: 22px;
    height: 22px;
    stroke: none;
}
.temperature {
    margin-right: 7px;
    font-family: "Open Sans", "Noto Sans CJK SC", sans-serif;
}
.ime {
    font-size: 15px;
    font-weight: 500;
}
.clock {
    width: 64px;
    display: flex;
    flex-direction: column;
    align-items: center;
    font-family: "Open Sans", sans-serif;
    font-size: 12px;
    line-height: 19px;
}
.notice {
    position: relative;
    width: 24px;
    height: 20px;
    margin-left: 10px;
}
.notice span {
    position: absolute;
    right: 0;
    bottom: -6px;
    width: 16px;
    height: 16px;
    border: 1px solid #666;
    border-radius: 50%;
    background: #d8dfe5;
    font-size: 11px;
    line-height: 14px;
    text-align: center;
}
```
